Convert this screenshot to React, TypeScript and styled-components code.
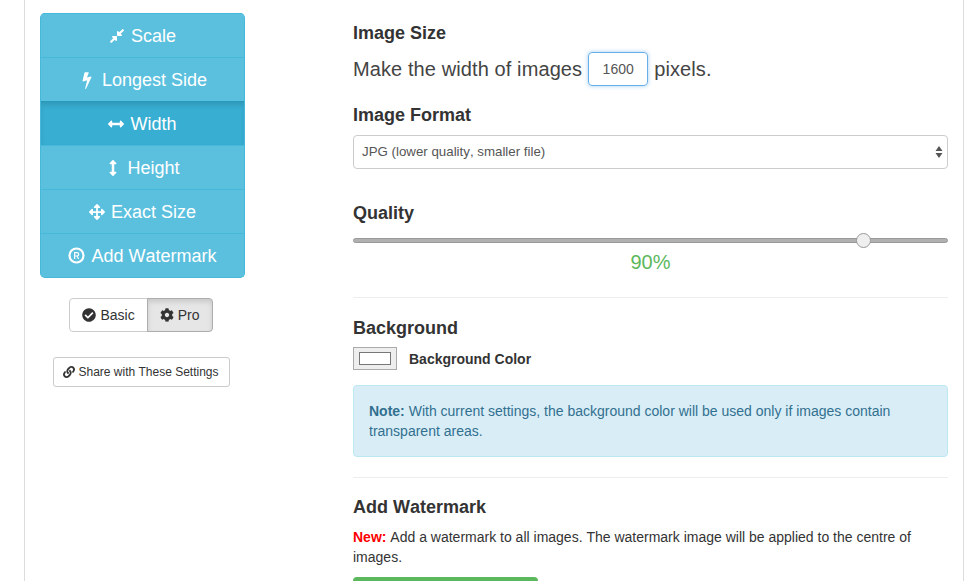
import { createGlobalStyle, styled } from "styled-components";
import {
  FaArrowsAlt,
  FaArrowsAltH,
  FaArrowsAltV,
  FaCheckCircle,
  FaCog,
  FaCompressAlt,
  FaLink,
} from "react-icons/fa";

const GlobalStyle = createGlobalStyle`
  html, body {
    margin: 0;
    height: 100%;
    overflow: hidden;
    background: #fff;
  }
  * { box-sizing: border-box; }
  body {
    font-family: "Liberation Sans", Arial, sans-serif;
    font-size: 14px;
    line-height: 20px;
    font-kerning: none;
    color: #333;
  }
`;

const Frame = styled.div`
  width: 940px;
  height: 581px;
  margin-left: 24px;
  border-left: 1px solid #ddd;
  border-right: 1px solid #ddd;
  padding: 13px 15px 0;
  display: grid;
  grid-template-columns: 205px 595px;
  column-gap: 108px;
  overflow: hidden;
`;

const Sidebar = styled.aside`
  display: flex;
  flex-direction: column;
  align-items: center;
`;

const NavList = styled.nav`
  width: 100%;
  border-radius: 5px;
  overflow: hidden;
  border: 1px solid #46b8da;
  border-width: 0 1px 1px;
  background: #5bc0de;
`;

const NavItem = styled.div<{ $active?: boolean }>`
  height: 44px;
  display: flex;
  align-items: center;
  justify-content: center;
  gap: 6px;
  font-size: 18px;
  color: #fff;
  background: ${(p) => (p.$active ? "#38aed2" : "#5bc0de")};
  border-top: 1px solid ${(p) => (p.$active ? "#269abc" : "#46b8da")};
  box-shadow: ${(p) => (p.$active ? "inset 0 3px 5px rgba(0,0,0,.125)" : "none")};
  margin: 0 -1px;

  &:first-child {
    border-top-color: #46b8da;
  }
  svg {
    font-size: 16px;
    flex: none;
  }
`;

const ModeGroup = styled.div`
  display: flex;
  margin: 20px 3px 0 0;
`;

const ModeButton = styled.div<{ $active?: boolean }>`
  height: 34px;
  padding: 0 12px;
  display: flex;
  align-items: center;
  gap: 4px;
  font-size: 14px;
  color: #333;
  border: 1px solid ${(p) => (p.$active ? "#adadad" : "#ccc")};
  background: ${(p) => (p.$active ? "#e6e6e6" : "#fff")};
  box-shadow: ${(p) => (p.$active ? "inset 0 3px 5px rgba(0,0,0,.125)" : "none")};
  border-radius: ${(p) => (p.$active ? "0 4px 4px 0" : "4px 0 0 4px")};
  margin-left: ${(p) => (p.$active ? "-1px" : "0")};
`;

const ShareButton = styled.div`
  margin: 25px 3px 0 0;
  height: 30px;
  width: 177px;
  display: flex;
  align-items: center;
  justify-content: center;
  gap: 3px;
  font-size: 12px;
  color: #333;
  border: 1px solid #ccc;
  border-radius: 3px;
  background: #fff;
`;

const Main = styled.main`
  display: flex;
  flex-direction: column;
`;

const Heading = styled.h4<{ $top: number }>`
  margin: ${(p) => p.$top}px 0 0;
  font-size: 18px;
  line-height: 20px;
  font-weight: 700;
  color: #333;
`;

const SizeRow = styled.div`
  display: flex;
  align-items: center;
  gap: 6px;
  margin-top: 9px;
  font-size: 20px;
  letter-spacing: 0.1px;
  color: #444;
`;

const SizeInput = styled.div`
  width: 60px;
  height: 34px;
  border: 1px solid #66afe9;
  border-radius: 4px;
  box-shadow: 0 0 4px rgba(102, 175, 233, 0.6);
  display: flex;
  align-items: center;
  justify-content: center;
  font-size: 14px;
  letter-spacing: 0;
  color: #555;
`;

const SelectBox = styled.div`
  margin-top: 10px;
  height: 34px;
  border: 1px solid #ccc;
  border-radius: 4px;
  padding: 0 4px 0 8px;
  display: flex;
  align-items: center;
  justify-content: space-between;
  font-size: 13.3px;
  color: #555;
`;

const Track = styled.div`
  position: relative;
  height: 5px;
  margin-top: 15px;
  border-radius: 3px;
  background: #b0b0b0;
  border: 1px solid #999;
`;

const Thumb = styled.div`
  position: absolute;
  top: -6px;
  width: 15px;
  height: 15px;
  margin-left: -8px;
  border-radius: 50%;
  border: 1px solid #999;
  background: #efefef;
`;

const Percent = styled.div`
  margin-top: 7px;
  text-align: center;
  font-size: 20px;
  line-height: 24px;
  color: #5cb85c;
`;

const Rule = styled.hr<{ $top: number }>`
  width: 100%;
  margin: ${(p) => p.$top}px 0 0;
  border: 0;
  border-top: 1px solid #eee;
`;

const ColorRow = styled.div`
  display: flex;
  align-items: center;
  gap: 12px;
  margin-top: 9px;
  font-weight: 700;
  font-size: 14px;
`;

const Swatch = styled.div`
  width: 44px;
  height: 23px;
  padding: 4px 5px;
  border: 1px solid #aaa;
  background: #eee;

  div {
    height: 100%;
    background: #fff;
    border: 1px solid #777;
  }
`;

const Note = styled.div`
  margin-top: 15px;
  padding: 15px;
  border: 1px solid #bce8f1;
  border-radius: 4px;
  background: #d9edf7;
  color: #31708f;
`;

const Paragraph = styled.p`
  margin: 10px 0 0;
`;

const NewLabel = styled.strong`
  color: #f00;
`;

const GreenButton = styled.div`
  flex: none;
  width: 185px;
  height: 34px;
  margin-top: 10px;
  border-radius: 4px;
  background: #5cb85c;
`;

const BoltIcon = () => (
  <svg width="18" height="18" viewBox="0 0 1792 1792" fill="currentColor">
    <path d="M1333 566q18 20 7 44l-540 1157q-13 25-42 25-4 0-14-2-17-5-25.5-19t-4.5-30l197-808-406 101q-4 1-12 1-18 0-31-11-18-15-13-39l201-825q4-14 16-23t28-9h328q19 0 32 12.5t13 29.5q0 8-5 18l-171 463 396-98q8-2 12-2 19 0 34 15z" />
  </svg>
);

const RegisteredIcon = () => (
  <svg width="17" height="17" viewBox="0 0 17 17" fill="none" stroke="currentColor">
    <circle cx="8.5" cy="8.5" r="7" strokeWidth="2.2" />
    <path d="M6.6 12V5.6h2.4a1.6 1.6 0 0 1 0 3.4H6.6M9 9l1.6 3" strokeWidth="1.2" />
  </svg>
);

const sizes = [
  { label: "Scale", icon: <FaCompressAlt /> },
  { label: "Longest Side", icon: <BoltIcon /> },
  { label: "Width", icon: <FaArrowsAltH />, active: true },
  { label: "Height", icon: <FaArrowsAltV /> },
  { label: "Exact Size", icon: <FaArrowsAlt /> },
  { label: "Add Watermark", icon: <RegisteredIcon /> },
];

const quality = 86;

export default function App() {
  return (
    <>
      <GlobalStyle />
      <Frame>
        <Sidebar>
          <NavList>
            {sizes.map((item) => (
              <NavItem key={item.label} $active={item.active}>
                {item.icon}
                {item.label}
              </NavItem>
            ))}
          </NavList>
          <ModeGroup>
            <ModeButton>
              <FaCheckCircle />
              Basic
            </ModeButton>
            <ModeButton $active>
              <FaCog />
              Pro
            </ModeButton>
          </ModeGroup>
          <ShareButton>
            <FaLink size={12} />
            Share with These Settings
          </ShareButton>
        </Sidebar>
        <Main>
          <Heading $top={10}>Image Size</Heading>
          <SizeRow>
            Make the width of images
            <SizeInput>1600</SizeInput>
            pixels.
          </SizeRow>
          <Heading $top={19}>Image Format</Heading>
          <SelectBox>
            JPG (lower quality, smaller file)
            <svg width="8" height="14" viewBox="0 0 8 14">
              <path d="M4 1 L7.5 6 H0.5 Z M4 13 L0.5 8 H7.5 Z" fill="#555" />
            </svg>
          </SelectBox>
          <Heading $top={34}>Quality</Heading>
          <Track>
            <Thumb style={{ left: `${quality}%` }} />
          </Track>
          <Percent>90%</Percent>
          <Rule $top={23} />
          <Heading $top={20}>Background</Heading>
          <ColorRow>
            <Swatch>
              <div />
            </Swatch>
            Background Color
          </ColorRow>
          <Note>
            <strong>Note:</strong> With current settings, the background color will be used only
            if images contain transparent areas.
          </Note>
          <Rule $top={20} />
          <Heading $top={19}>Add Watermark</Heading>
          <Paragraph>
            <NewLabel>New:</NewLabel> Add a watermark to all images. The watermark image will be
            applied to the centre of images.
          </Paragraph>
          <GreenButton />
        </Main>
      </Frame>
    </>
  );
}
